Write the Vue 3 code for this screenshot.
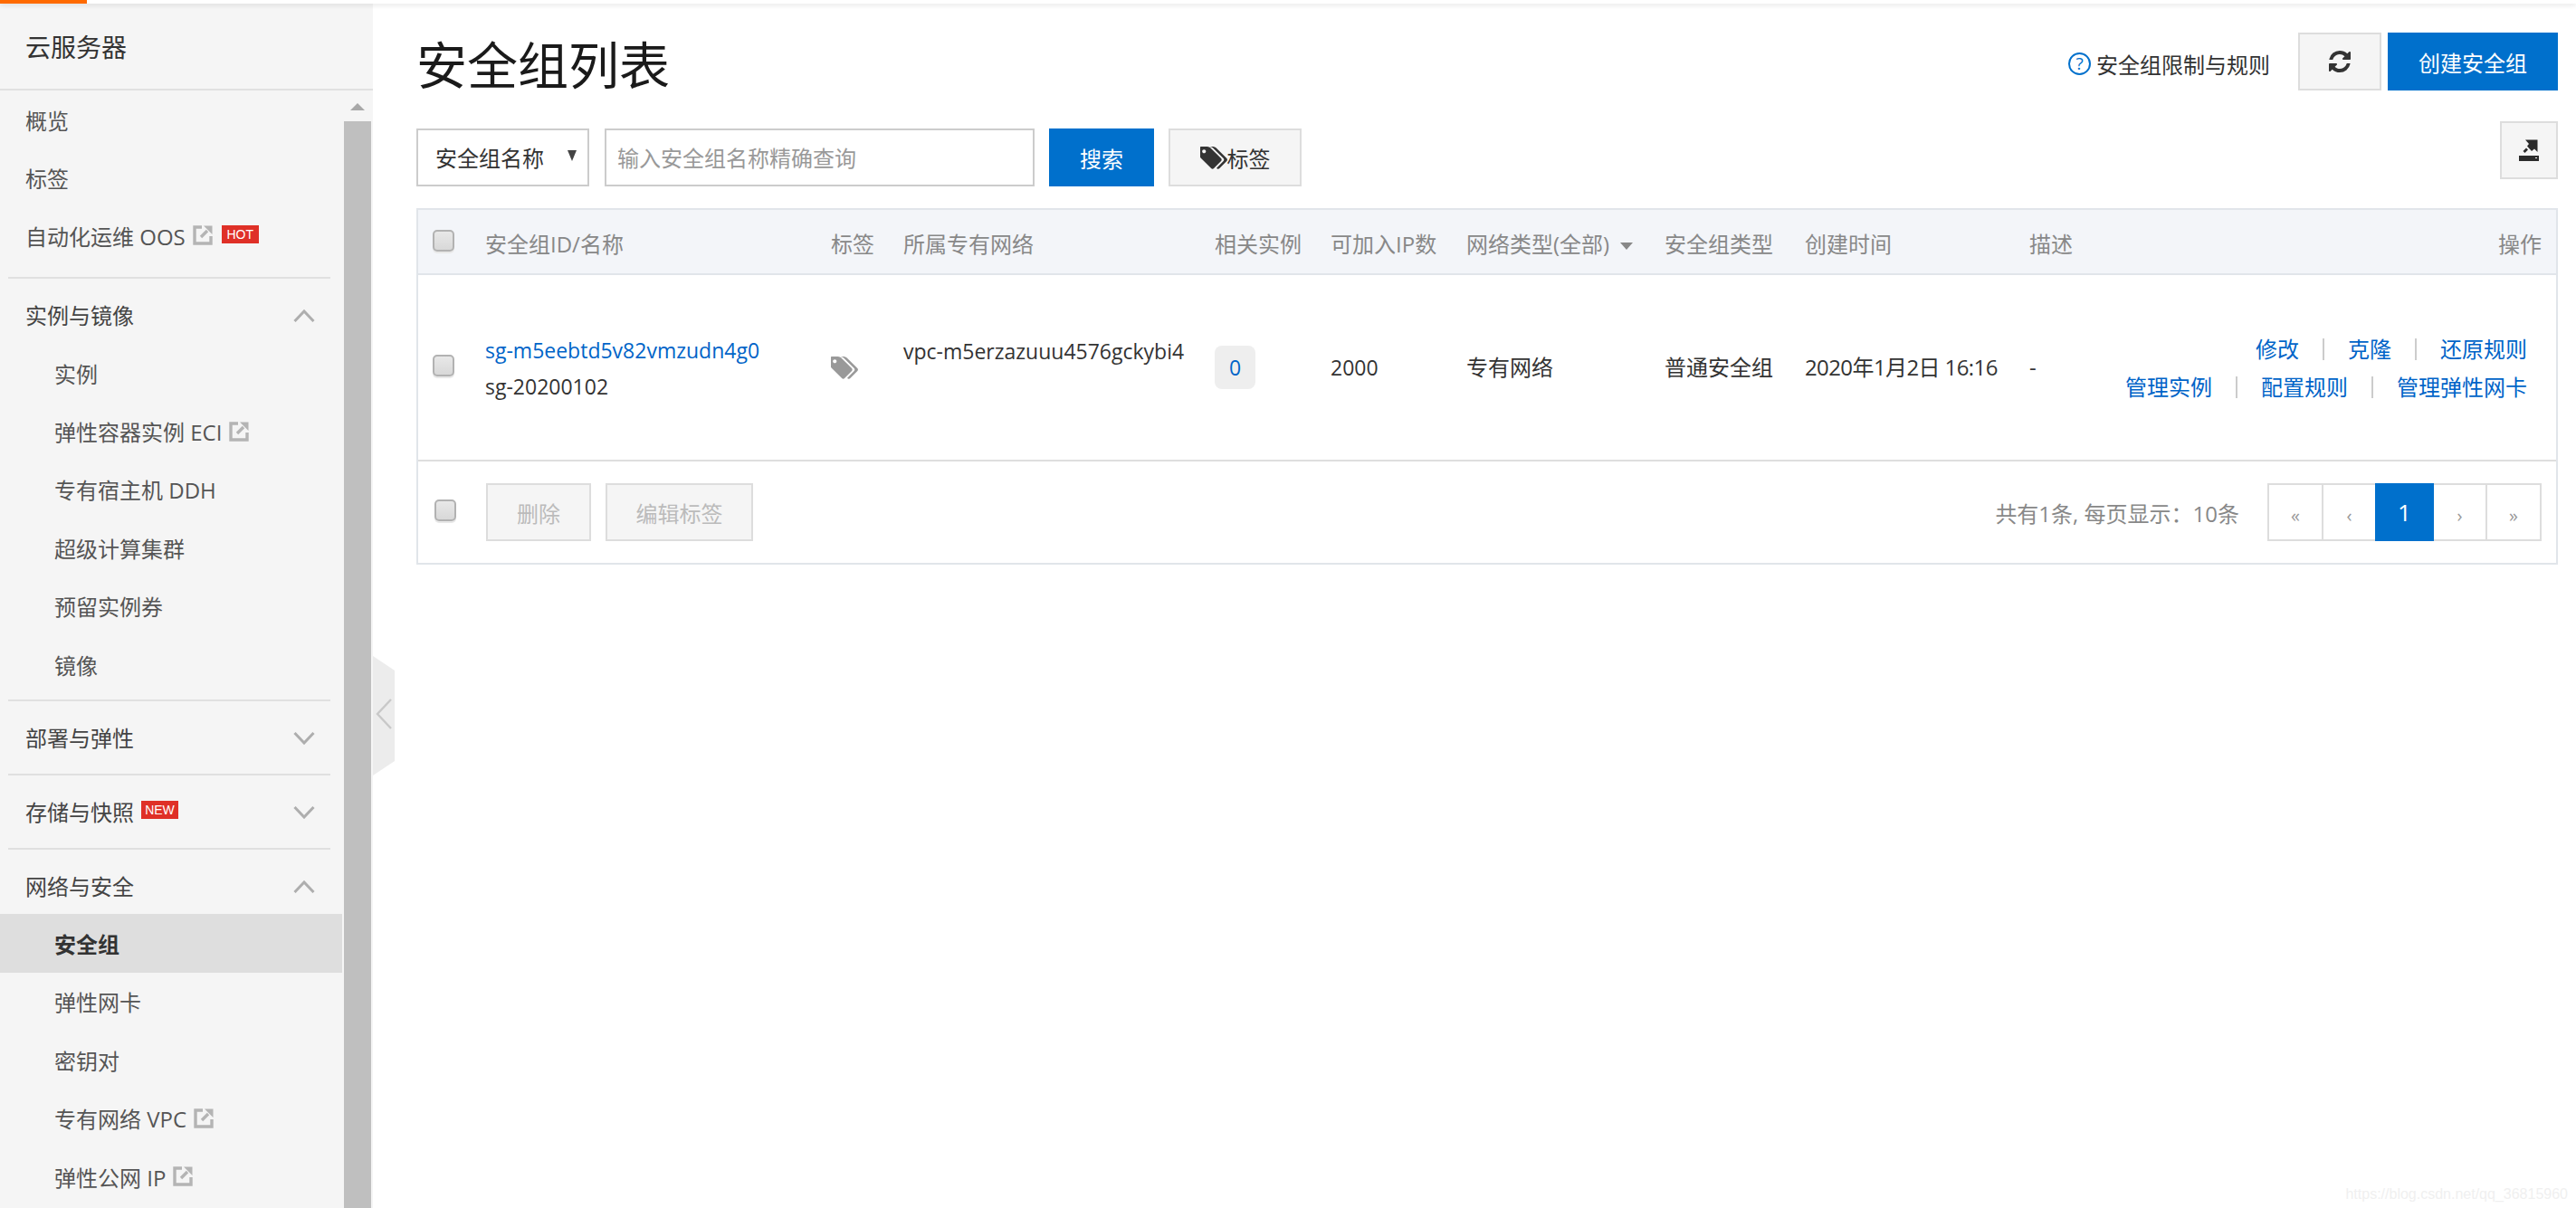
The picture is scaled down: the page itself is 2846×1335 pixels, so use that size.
<script setup>
import { ref } from "vue";

const topItems = [
  { label: "概览" },
  { label: "标签" },
  { label: "自动化运维 OOS", external: true, badge: "HOT" },
];

const groups = ref([
  {
    title: "实例与镜像",
    open: true,
    items: [
      { label: "实例" },
      { label: "弹性容器实例 ECI", external: true },
      { label: "专有宿主机 DDH" },
      { label: "超级计算集群" },
      { label: "预留实例券" },
      { label: "镜像" },
    ],
  },
  { title: "部署与弹性", open: false, items: [] },
  { title: "存储与快照", open: false, badge: "NEW", items: [] },
  {
    title: "网络与安全",
    open: true,
    items: [
      { label: "安全组", active: true },
      { label: "弹性网卡" },
      { label: "密钥对" },
      { label: "专有网络 VPC", external: true },
      { label: "弹性公网 IP", external: true },
    ],
  },
]);

const actionRows = [
  ["修改", "克隆", "还原规则"],
  ["管理实例", "配置规则", "管理弹性网卡"],
];

const pages = ["«", "‹", "1", "›", "»"];
</script>

<template>
  <div class="page">
    <div class="topbar"><div class="topbar-mark"></div></div>
    <div class="body">
      <aside class="sidebar">
        <div class="side-title">云服务器</div>
        <div class="side-scroll">
          <nav class="nav">
            <a v-for="item in topItems" :key="item.label" class="nav-item">
              <span>{{ item.label }}</span>
              <svg v-if="item.external" class="ext" viewBox="0 0 22 22">
                <path d="M10 2H2V20H20V12" fill="none" stroke="#b4b4b4" stroke-width="3.4" />
                <path d="M9 13L16 6" fill="none" stroke="#b4b4b4" stroke-width="3.4" />
                <path d="M12 0.5H21.5V10Z" fill="#b4b4b4" />
              </svg>
              <span v-if="item.badge" class="badge">{{ item.badge }}</span>
            </a>
            <section v-for="group in groups" :key="group.title" class="group">
              <div class="group-title">
                <span class="group-name">{{ group.title }}</span>
                <span v-if="group.badge" class="badge group-badge">{{ group.badge }}</span>
                <svg class="chevron" viewBox="0 0 24 14">
                  <path :d="group.open ? 'M1.5 13L12 2L22.5 13' : 'M1.5 1L12 12L22.5 1'" fill="none" stroke="#aeaeae" stroke-width="3" />
                </svg>
              </div>
              <div v-if="group.open" class="sub-list">
                <a v-for="item in group.items" :key="item.label" class="sub-item" :class="{ active: item.active }">
                  <span>{{ item.label }}</span>
                  <svg v-if="item.external" class="ext" viewBox="0 0 22 22">
                    <path d="M10 2H2V20H20V12" fill="none" stroke="#b4b4b4" stroke-width="3.4" />
                    <path d="M9 13L16 6" fill="none" stroke="#b4b4b4" stroke-width="3.4" />
                    <path d="M12 0.5H21.5V10Z" fill="#b4b4b4" />
                  </svg>
                </a>
              </div>
            </section>
          </nav>
          <div class="scrollbar">
            <div class="scroll-up"></div>
            <div class="scroll-thumb"></div>
          </div>
        </div>
      </aside>

      <!-- collapse handle sits over the page edge -->
      <div class="collapse">
        <svg width="24" height="132" viewBox="0 0 24 132">
          <path d="M0 0L24 16V116L0 132Z" fill="#ececec" />
          <path d="M20 48L5 64L20 80" fill="none" stroke="#c8c8c8" stroke-width="2.4" />
        </svg>
      </div>

      <main class="main">
        <header class="head">
          <h1>安全组列表</h1>
          <div class="head-right">
            <a class="help"><span class="help-icon">?</span>安全组限制与规则</a>
            <button class="btn refresh">
              <svg viewBox="0 0 1536 1536" width="24" height="24">
                <path fill="#333" d="M1511 928q0 5-1 7-64 268-268 434.5t-478 166.5q-146 0-282.5-55t-243.5-157l-129 129q-19 19-45 19t-45-19-19-45v-448q0-26 19-45t45-19h448q26 0 45 19t19 45-19 45l-137 137q71 66 161 102t187 36q134 0 250-65t186-179q11-17 53-117 8-23 30-23h192q13 0 22.5 9.5t9.5 22.5zm25-800v448q0 26-19 45t-45 19h-448q-26 0-45-19t-19-45 19-45l138-138q-148-137-349-137-134 0-250 65t-186 179q-11 17-53 117-8 23-30 23h-199q-13 0-22.5-9.5t-9.5-22.5v-7q65-268 270-434.5t480-166.5q146 0 284 55.5t245 156.5l130-129q19-19 45-19t45 19 19 45z" />
              </svg>
            </button>
            <button class="btn primary create">创建安全组</button>
          </div>
        </header>

        <div class="toolbar">
          <div class="filter">
            <div class="select">安全组名称<span class="select-caret"></span></div>
            <input class="search" type="text" placeholder="输入安全组名称精确查询" />
            <button class="btn primary search-btn">搜索</button>
            <button class="btn tag-btn">
              <svg viewBox="0 128 1835 1536" width="30" height="25">
                <path fill="#333" d="M384 448q0-53-37.5-90.5t-90.5-37.5-90.5 37.5-37.5 90.5 37.5 90.5 90.5 37.5 90.5-37.5 37.5-90.5zm1067 576q0 53-37 90l-491 492q-39 37-91 37-53 0-90-37l-715-716q-38-37-64.5-101t-26.5-117v-416q0-52 38-90t90-38h416q53 0 117 26.5t102 64.5l715 714q37 39 37 91zm384 0q0 53-37 90l-491 492q-39 37-91 37-36 0-59-14t-53-45l470-470q37-37 37-90 0-52-37-91l-715-714q-38-38-102-64.5t-117-26.5h224q53 0 117 26.5t102 64.5l715 714q37 39 37 91z" />
              </svg>标签
            </button>
          </div>
          <button class="btn export">
            <svg viewBox="0 0 22 24" width="22" height="24">
              <path fill="#2b2b2b" fill-rule="evenodd" d="M0 18H22V24H0ZM18 20H20V21H18Z" />
              <path fill="#2b2b2b" d="M7 0.5H20.5V14L17 10.5L14 13L9 7.5L11 5Z" />
              <path fill="#2b2b2b" d="M4.500 13L8 9.500L10 11.500L6.500 15Z" />
            </svg>
          </button>
        </div>

        <div class="table-box">
          <table>
            <colgroup>
              <col style="width: 58px" />
              <col style="width: 382px" />
              <col style="width: 80px" />
              <col style="width: 344px" />
              <col style="width: 128px" />
              <col style="width: 150px" />
              <col style="width: 219px" />
              <col style="width: 155px" />
              <col style="width: 248px" />
              <col style="width: 98px" />
              <col />
            </colgroup>
            <thead>
              <tr>
                <th class="check-cell"><input type="checkbox" class="check" /></th>
                <th>安全组ID/名称</th>
                <th>标签</th>
                <th>所属专有网络</th>
                <th>相关实例</th>
                <th>可加入IP数</th>
                <th>网络类型(全部)<span class="th-caret"></span></th>
                <th>安全组类型</th>
                <th>创建时间</th>
                <th>描述</th>
                <th class="th-right">操作</th>
              </tr>
            </thead>
            <tbody>
              <tr>
                <td class="check-cell"><input type="checkbox" class="check" /></td>
                <td class="latin name-cell">
                  <a class="link">sg-m5eebtd5v82vmzudn4g0</a>
                  <div>sg-20200102</div>
                </td>
                <td>
                  <svg class="row-tag" viewBox="0 128 1835 1536" width="30" height="25">
                    <path fill="#999" d="M384 448q0-53-37.5-90.5t-90.5-37.5-90.5 37.5-37.5 90.5 37.5 90.5 90.5 37.5 90.5-37.5 37.5-90.5zm1067 576q0 53-37 90l-491 492q-39 37-91 37-53 0-90-37l-715-716q-38-37-64.5-101t-26.5-117v-416q0-52 38-90t90-38h416q53 0 117 26.5t102 64.5l715 714q37 39 37 91zm384 0q0 53-37 90l-491 492q-39 37-91 37-36 0-59-14t-53-45l470-470q37-37 37-90 0-52-37-91l-715-714q-38-38-102-64.5t-117-26.5h224q53 0 117 26.5t102 64.5l715 714q37 39 37 91z" />
                  </svg>
                </td>
                <td class="latin"><div class="vpc">vpc-m5erzazuuu4576gckybi4</div></td>
                <td><span class="count latin">0</span></td>
                <td class="latin">2000</td>
                <td>专有网络</td>
                <td>普通安全组</td>
                <td class="date">2020年1月2日 16:16</td>
                <td>-</td>
                <td class="actions">
                  <div v-for="(row, i) in actionRows" :key="i" class="action-row">
                    <a v-for="action in row" :key="action" class="link action">{{ action }}</a>
                  </div>
                </td>
              </tr>
            </tbody>
          </table>
          <footer class="foot">
            <input type="checkbox" class="check foot-check" />
            <button class="btn disabled del">删除</button>
            <button class="btn disabled edit">编辑标签</button>
            <div class="info">共有1条, 每页显示：10条</div>
            <div class="pager">
              <span v-for="p in pages" :key="p" class="pager-cell" :class="{ current: p === '1' }">{{ p }}</span>
            </div>
          </footer>
        </div>
      </main>
    </div>
    <div class="watermark">https://blog.csdn.net/qq_36815960</div>
  </div>
</template>

<style>
html,
body {
  margin: 0;
  background: #fff;
}
</style>

<style scoped>
.page {
  position: relative;
  height: 1335px;
  overflow: hidden;
  font-family: "Open Sans", "Noto Sans CJK SC", sans-serif;
  font-size: 24px;
  color: #333;
}

.topbar {
  height: 4px;
  background: #fff;
  box-shadow: 0 2px 5px rgba(0, 0, 0, 0.1);
  position: relative;
  z-index: 2;
}

.topbar-mark {
  width: 96px;
  height: 4px;
  background: #ff6a00;
}

.body {
  display: flex;
  height: 1331px;
}

.sidebar {
  width: 412px;
  flex-shrink: 0;
  background: #f5f5f5;
  display: flex;
  flex-direction: column;
}

.side-title {
  height: 94px;
  line-height: 97px;
  padding-left: 28px;
  font-size: 28px;
  color: #333;
  border-bottom: 2px solid #e1e1e1;
}

.side-scroll {
  flex: 1;
  display: flex;
  min-height: 0;
}

.nav {
  width: 378px;
  overflow: hidden;
}

.nav-item {
  display: flex;
  align-items: center;
  height: 64px;
  padding-left: 28px;
  color: #555;
}

.ext {
  width: 22px;
  height: 22px;
  margin-left: 8px;
  flex-shrink: 0;
}

.badge {
  width: 41px;
  height: 20px;
  line-height: 20px;
  margin-left: 10px;
  margin-bottom: 2px;
  text-align: center;
  background: #df3027;
  color: #fff;
  font-family: "Liberation Sans", sans-serif;
  font-size: 14px;
}

.group-badge {
  margin-left: 8px;
  margin-bottom: 6px;
}

.group {
  margin-top: 14px;
}

.group::before {
  content: "";
  display: block;
  height: 2px;
  margin: 0 13px 9px 9px;
  background: #e0e0e0;
}

.group-title {
  display: flex;
  align-items: center;
  height: 64px;
  padding-left: 28px;
  color: #444;
}

.group-name {
  margin-bottom: 3px;
}

.chevron {
  width: 24px;
  height: 14px;
  margin-left: auto;
  margin-right: 30px;
}

.group + .group {
  margin-top: 7px;
}

.sub-list {
  margin-top: -1px;
}

.group:last-child .sub-list {
  margin-top: -2px;
}

.sub-item {
  display: flex;
  align-items: center;
  height: 64.4px;
  padding-left: 60px;
  color: #555;
}

.sub-item.active {
  background: #dedede;
  color: #333;
  font-weight: 700;
}

.scrollbar {
  width: 30px;
  margin-left: 2px;
  display: flex;
  flex-direction: column;
}

.scroll-up {
  height: 34px;
  position: relative;
}

.scroll-up::after {
  content: "";
  position: absolute;
  left: 7px;
  top: 14px;
  border-left: 8px solid transparent;
  border-right: 8px solid transparent;
  border-bottom: 8px solid #a8a8a8;
}

.scroll-thumb {
  flex: 1;
  background: #bfbfbf;
}

.collapse {
  position: absolute;
  left: 412px;
  top: 725px;
  height: 132px;
}

.main {
  flex: 1;
  min-width: 0;
  padding: 32px 20px 0 48px;
}

.head {
  display: flex;
  justify-content: space-between;
  align-items: center;
  height: 64px;
  margin-bottom: 42px;
}

h1 {
  margin: 0;
  padding-top: 6px;
  font-size: 56px;
  font-weight: 400;
  color: #1a1a1a;
  line-height: 64px;
}

.head-right {
  display: flex;
  align-items: center;
}

.help {
  display: flex;
  align-items: center;
  color: #333;
  margin-right: 31px;
  padding-top: 4px;
}

.help-icon {
  width: 21px;
  height: 21px;
  line-height: 21px;
  margin-right: 6px;
  border: 2px solid #0070cc;
  border-radius: 50%;
  text-align: center;
  color: #0070cc;
  font-size: 19px;
}

.btn {
  box-sizing: border-box;
  height: 64px;
  font-family: inherit;
  font-size: 24px;
  color: #333;
  background: #f5f5f5;
  border: 2px solid #ddd;
  padding: 0;
  display: inline-flex;
  align-items: center;
  justify-content: center;
}

.btn.primary {
  background: #0070cc;
  border-color: #0070cc;
  color: #fff;
}

.refresh {
  width: 92px;
  margin-right: 7px;
}

.create {
  width: 188px;
}

.toolbar {
  display: flex;
  justify-content: space-between;
  margin-bottom: 24px;
}

.filter {
  display: flex;
}

.select {
  box-sizing: border-box;
  width: 191px;
  height: 64px;
  line-height: 62px;
  padding-left: 19px;
  border: 2px solid #ccc;
  position: relative;
}

.select-caret {
  position: absolute;
  right: 12px;
  top: 22px;
  border-left: 5.5px solid transparent;
  border-right: 5.5px solid transparent;
  border-top: 12px solid #444;
}

.search {
  box-sizing: border-box;
  width: 475px;
  height: 64px;
  margin-left: 17px;
  padding: 0 12px;
  border: 2px solid #ccc;
  border-radius: 0;
  outline: none;
  font-family: inherit;
  font-size: 24px;
}

.search::placeholder {
  color: #999;
}

.search-btn {
  width: 116px;
  margin-left: 16px;
}

.tag-btn {
  width: 147px;
  margin-left: 16px;
}

.export {
  width: 64px;
  margin-top: -8px;
}

.table-box {
  border: 2px solid #e1e5ea;
}

table {
  width: 100%;
  border-collapse: collapse;
  table-layout: fixed;
}

th {
  height: 68px;
  padding: 2px 0 0 16px;
  background: #f3f5f9;
  border-bottom: 2px solid #e1e5ea;
  font-weight: 400;
  text-align: left;
  color: #888;
  white-space: nowrap;
}

td {
  height: 206px;
  padding: 0 0 0 16px;
  border-bottom: 2px solid #dedede;
  color: #333;
  line-height: 40px;
  white-space: nowrap;
  box-sizing: border-box;
}

.latin {
  font-size: 23px;
}

.name-cell {
  padding-top: 2px;
}

.date {
  letter-spacing: -0.6px;
}

th.check-cell,
td.check-cell {
  padding-left: 16px;
}

.check {
  appearance: none;
  display: block;
  box-sizing: border-box;
  width: 24px;
  height: 24px;
  margin: -4px 0 0;
  background: linear-gradient(#e8e8e8, #d8d8d8);
  border: 2px solid #b2b2b2;
  border-radius: 5px;
  box-shadow: 0 2px 0 #e8e8e8;
}

.th-caret {
  display: inline-block;
  vertical-align: middle;
  margin-left: 12px;
  border-left: 7px solid transparent;
  border-right: 7px solid transparent;
  border-top: 8px solid #888;
}

.th-right {
  text-align: right;
  padding-right: 16px;
}

.link {
  color: #0064c8;
}

.row-tag {
  display: block;
}

.vpc {
  padding-bottom: 36px;
}

.count {
  display: block;
  width: 45px;
  height: 48px;
  line-height: 48px;
  text-align: center;
  background: #eee;
  border-radius: 8px;
  color: #0064c8;
}

.actions {
  padding-top: 2px;
  padding-right: 32px;
  text-align: right;
  overflow: visible;
}

.action-row {
  display: flex;
  justify-content: flex-end;
  height: 42px;
  line-height: 42px;
}

.action {
  display: block;
  padding-left: 28px;
  margin-left: 26px;
  position: relative;
}

.action:first-child {
  padding-left: 0;
  margin-left: 0;
}

.action:not(:first-child)::before {
  content: "";
  position: absolute;
  left: 0;
  top: 9px;
  width: 2px;
  height: 24px;
  background: #ccc;
}

.foot {
  display: flex;
  align-items: center;
  height: 112px;
  padding: 0 16px 0 18px;
  box-sizing: border-box;
}

.foot-check {
  margin-right: 33px;
}

.disabled {
  color: #bbb;
}

.del {
  width: 116px;
  margin-right: 16px;
}

.edit {
  width: 163px;
}

.info {
  margin-left: auto;
  margin-right: 31px;
  color: #888;
}

.pager {
  display: flex;
  height: 64px;
  box-sizing: border-box;
  border: 2px solid #ddd;
}

.pager-cell {
  display: flex;
  align-items: center;
  justify-content: center;
  width: 57px;
  padding-top: 6px;
  box-sizing: border-box;
  color: #999;
  font-size: 20px;
}

.pager-cell:first-child,
.pager-cell:last-child {
  width: 60px;
}

.pager-cell:first-child {
  border-right: 2px solid #ddd;
}

.pager-cell:last-child {
  border-left: 2px solid #ddd;
}

.pager-cell.current {
  width: 65px;
  margin: -2px 0;
  background: #0070cc;
  color: #fff;
  font-size: 26px;
  padding-top: 0;
}

.watermark {
  position: absolute;
  right: 9px;
  bottom: 6px;
  font-family: "Liberation Sans", sans-serif;
  font-size: 16px;
  color: #f0f0f0;
}
</style>
